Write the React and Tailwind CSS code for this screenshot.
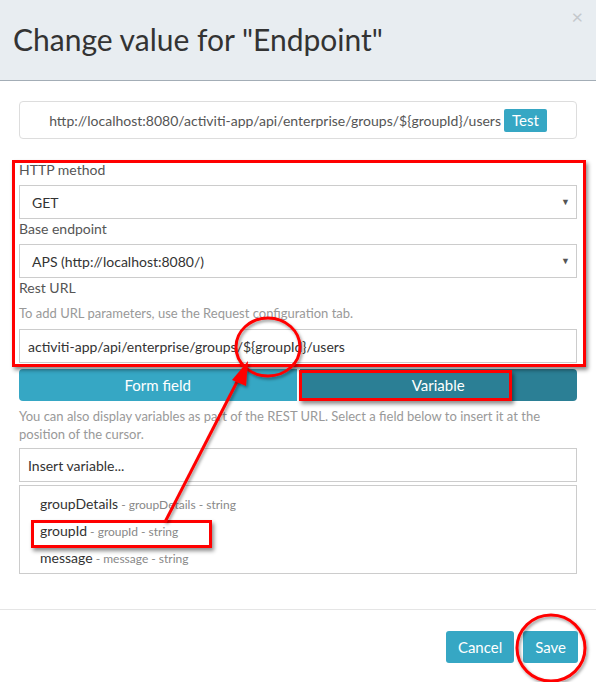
const font = { fontFamily: "Lato, 'Open Sans', sans-serif" };

function Label({ children }) {
  return <div className="text-[14px] leading-[20px] text-[#555] mb-[5px]">{children}</div>;
}

function Select({ value }) {
  return (
    <div className="h-[34px] border border-[#ccc] flex items-center justify-between pl-[12px] pr-[6px] text-[14px] text-[#333] bg-white">
      <span>{value}</span>
      <span className="text-[9px] text-[#555]">▼</span>
    </div>
  );
}

function VarItem({ name }) {
  return (
    <div className="leading-[26px] text-[14px] text-[#333]">
      {name}
      <span className="text-[12px] text-[#888]"> - {name} - string</span>
    </div>
  );
}

function Annotations() {
  const box = "absolute border-[3px] border-[#ff0000] shadow-[2px_3px_4px_rgba(0,0,0,0.45)]";
  return (
    <>
      <div className={box + " left-[12px] top-[160px] w-[574px] h-[207px]"} />
      <div className={box + " left-[299px] top-[370px] w-[213px] h-[31px]"} />
      <div className={box + " left-[31px] top-[520px] w-[181px] h-[28px]"} />
      <svg className="absolute left-0 top-0" width="596" height="682">
        <defs>
          <filter id="sh" x="-20%" y="-20%" width="140%" height="140%">
            <feDropShadow dx="1.5" dy="2" stdDeviation="1.5" floodOpacity="0.4" />
          </filter>
        </defs>
        <g filter="url(#sh)" fill="none" stroke="#ff0000" strokeWidth="3">
          <ellipse cx="268" cy="347" rx="32" ry="29" />
          <ellipse cx="551" cy="648" rx="34" ry="33" />
          <line x1="165" y1="522" x2="240" y2="376" />
        </g>
        <polygon points="248,361 232,380 246,386" fill="#ff0000" filter="url(#sh)" />
      </svg>
    </>
  );
}

export default function App() {
  return (
    <div className="relative w-[596px] h-[682px] bg-white overflow-hidden" style={font}>
      <div className="h-[81px] bg-[#e8edf1] border-b border-[#a3adb6] pl-[13px] pt-[19px]">
        <h1 className="text-[30px] leading-[40px] text-[#333]">Change value for "Endpoint"</h1>
      </div>
      <span className="absolute right-[13px] top-[1px] text-[20px] text-[#c4c8cc]">×</span>

      <div className="px-[19px] pt-[20px]">
        <div className="h-[38px] border border-[#ddd] rounded-[4px] flex items-center justify-center gap-[3px] text-[14px] text-[#555]">
          <span>http://localhost:8080/activiti-app/api/enterprise/groups/${"{groupId}"}/users</span>
          <span className="h-[23px] px-[8px] bg-[#36a7c4] text-white text-[15px] leading-[23px] rounded-[2px]">Test</span>
        </div>

        <div className="mt-[21px]">
          <Label>HTTP method</Label>
          <Select value="GET" />
          <Label>Base endpoint</Label>
          <Select value="APS (http://localhost:8080/)" />
          <Label>Rest URL</Label>
          <div className="text-[13px] leading-[20px] text-[#999] mt-[3px] mb-[6px]">
            To add URL parameters, use the Request configuration tab.
          </div>
          <div className="h-[34px] border border-[#ccc] flex items-center pl-[8px] text-[14px] text-[#333]">
            activiti-app/api/enterprise/groups/${"{groupId}"}/users
          </div>
        </div>

        <div className="mt-[6px] flex gap-[3px] h-[32px] text-white text-[15px]">
          <div className="flex-1 bg-[#36a7c4] rounded-l-[4px] flex items-center justify-center">Form field</div>
          <div className="flex-1 bg-[#2b7f95] rounded-r-[4px] flex items-center justify-center">Variable</div>
        </div>

        <div className="mt-[6px] text-[13px] leading-[18px] text-[#999] pr-[10px]">
          You can also display variables as part of the REST URL. Select a field below to insert it at the position of the cursor.
        </div>

        <div className="mt-[5px] h-[34px] border border-[#ccc] flex items-center pl-[8px] text-[14px] text-[#333]">
          Insert variable...
        </div>

        <div className="mt-[3px] h-[89px] border border-[#ccc] pl-[20px] pt-[5px]">
          <VarItem name="groupDetails" />
          <VarItem name="groupId" />
          <VarItem name="message" />
        </div>
      </div>

      <div className="mt-[35px] border-t border-[#e5e5e5] flex justify-end gap-[9px] pr-[18px] pt-[21px]">
        <span className="h-[32px] px-[12px] bg-[#36a7c4] text-white text-[15px] leading-[32px] rounded-[3px]">Cancel</span>
        <span className="h-[32px] px-[12px] bg-[#36a7c4] text-white text-[15px] leading-[32px] rounded-[3px]">Save</span>
      </div>

      <Annotations />
    </div>
  );
}
